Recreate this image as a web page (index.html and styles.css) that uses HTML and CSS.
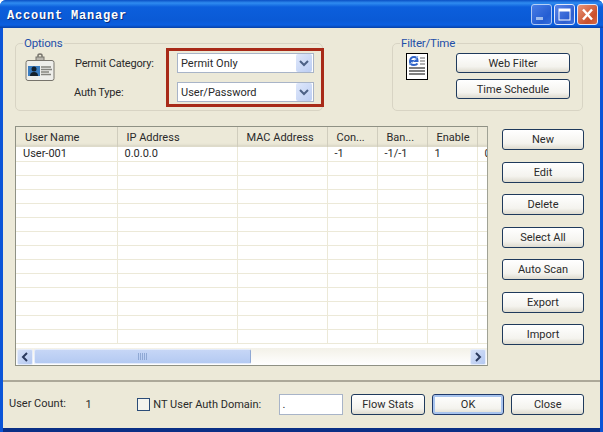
FILE: index.html
```html
<!DOCTYPE html>
<html lang="en">
<head>
<meta charset="utf-8">
<title>Account Manager</title>
<link rel="stylesheet" href="styles.css">
</head>
<body>
<div class="window">
  <header class="titlebar">
    <span class="title">Account Manager</span>
    <div class="caption-buttons">
      <span class="cap cap-min"><svg width="21" height="21" viewBox="0 0 21 21"><rect x="5" y="13" width="7" height="3" fill="#c8d6f4"/></svg></span>
      <span class="cap cap-max"><svg width="21" height="21" viewBox="0 0 21 21"><rect x="5" y="5" width="11" height="11" fill="none" stroke="#fff"/><rect x="5" y="5" width="11" height="2.5" fill="#fff"/></svg></span>
      <span class="cap cap-close"><svg width="21" height="21" viewBox="0 0 21 21"><path d="M6 5.500 15 15.500M15 5.500 6 15.500" stroke="#fff" stroke-width="2.400" fill="none"/></svg></span>
    </div>
  </header>
  <main class="client">
    <section class="top-row">
      <fieldset class="group group-options">
        <legend>Options</legend>
        <svg class="badge-icon" width="30" height="30" viewBox="0 0 30 30">
          <path d="M13 5V2.500Q13 1 15 1T17 2.500V5" fill="none" stroke="#77746c" stroke-width="1.500"/>
          <rect x="11" y="4" width="8" height="5" fill="#b9b6ad" stroke="#77746c"/>
          <rect x="1" y="7.500" width="28" height="20" rx="2" fill="#eeeeea" stroke="#77746c"/>
          <rect x="3" y="13" width="12" height="10" fill="#3a7cc0"/>
          <circle cx="9" cy="16" r="2.500" fill="#14202c"/>
          <path d="M5 23Q5 19 9 19T13 23Z" fill="#14202c"/>
          <path d="M16 14H26M16 16.500H27M16 19H24M16 21.500H26" stroke="#85857f" stroke-width="1.300"/>
        </svg>
        <div class="form-grid">
          <label class="field-label">Permit Category:</label>
          <div class="select"><span>Permit Only</span><span class="select-arrow"><svg width="16" height="18" viewBox="0 0 16 18"><path d="M4 7 8 11 12 7" fill="none" stroke="#4d6185" stroke-width="2"/></svg></span></div>
          <label class="field-label label-auth">Auth Type:</label>
          <div class="select"><span>User/Password</span><span class="select-arrow"><svg width="16" height="18" viewBox="0 0 16 18"><path d="M4 7 8 11 12 7" fill="none" stroke="#4d6185" stroke-width="2"/></svg></span></div>
        </div>
        <div class="highlight"></div>
      </fieldset>
      <fieldset class="group group-filter">
        <legend>Filter/Time</legend>
        <svg class="page-icon" width="22" height="27" viewBox="0 0 22 27">
          <rect x=".5" y=".5" width="21" height="26" fill="#fff" stroke="#000"/>
          <path d="M3 15H19M3 18H19M3 21H19" stroke="#555" stroke-width="1.600"/>
          <path d="M14 5H19M14 8H19M14 11H19" stroke="#999" stroke-width="1.400"/>
          <path d="M4 8H11.500Q11.500 4 8 4T4 8 8 12Q10.500 12 11.500 10.500" fill="none" stroke="#2f63c8" stroke-width="2"/>
          <path d="M3 12Q8 9 12 3" fill="none" stroke="#8ab0e8"/>
        </svg>
        <div class="filter-buttons">
          <button class="btn btn-filter">Web Filter</button>
          <button class="btn btn-filter">Time Schedule</button>
        </div>
      </fieldset>
    </section>
    <section class="mid-row">
      <div class="list">
        <div class="list-view">
          <table class="grid">
            <colgroup><col class="c1"><col class="c2"><col class="c3"><col class="c4"><col class="c5"><col class="c6"><col class="c7"></colgroup>
            <thead>
              <tr><th>User Name</th><th>IP Address</th><th>MAC Address</th><th>Con...</th><th>Ban...</th><th>Enable</th><th class="th-end"></th></tr>
            </thead>
            <tbody>
              <tr><td>User-001</td><td>0.0.0.0</td><td></td><td>-1</td><td>-1/-1</td><td>1</td><td class="td-clip">0</td></tr>
              <tr><td></td><td></td><td></td><td></td><td></td><td></td><td></td></tr>
              <tr><td></td><td></td><td></td><td></td><td></td><td></td><td></td></tr>
              <tr><td></td><td></td><td></td><td></td><td></td><td></td><td></td></tr>
              <tr><td></td><td></td><td></td><td></td><td></td><td></td><td></td></tr>
              <tr><td></td><td></td><td></td><td></td><td></td><td></td><td></td></tr>
              <tr><td></td><td></td><td></td><td></td><td></td><td></td><td></td></tr>
              <tr><td></td><td></td><td></td><td></td><td></td><td></td><td></td></tr>
              <tr><td></td><td></td><td></td><td></td><td></td><td></td><td></td></tr>
              <tr><td></td><td></td><td></td><td></td><td></td><td></td><td></td></tr>
              <tr><td></td><td></td><td></td><td></td><td></td><td></td><td></td></tr>
              <tr><td></td><td></td><td></td><td></td><td></td><td></td><td></td></tr>
              <tr><td></td><td></td><td></td><td></td><td></td><td></td><td></td></tr>
              <tr><td></td><td></td><td></td><td></td><td></td><td></td><td></td></tr>
            </tbody>
          </table>
        </div>
        <div class="scrollbar">
          <span class="sb-btn"><svg width="16" height="16" viewBox="0 0 16 16"><path d="M10 4 6 8 10 12" fill="none" stroke="#2b3a5e" stroke-width="2"/></svg></span>
          <div class="sb-track">
            <span class="sb-thumb"><svg width="9" height="7" viewBox="0 0 9 7"><path d="M.5 0V7M2.500 0V7M4.500 0V7M6.500 0V7M8.500 0V7" stroke="#8fa8d4"/></svg></span>
          </div>
          <span class="sb-btn"><svg width="16" height="16" viewBox="0 0 16 16"><path d="M6 4 10 8 6 12" fill="none" stroke="#2b3a5e" stroke-width="2"/></svg></span>
        </div>
      </div>
      <div class="side-buttons">
        <button class="btn btn-side">New</button>
        <button class="btn btn-side">Edit</button>
        <button class="btn btn-side">Delete</button>
        <button class="btn btn-side">Select All</button>
        <button class="btn btn-side">Auto Scan</button>
        <button class="btn btn-side">Export</button>
        <button class="btn btn-side">Import</button>
      </div>
    </section>
    <footer class="bottom-row">
      <span class="count-label">User Count:</span>
      <span class="count-value">1</span>
      <label class="check-wrap"><span class="checkbox"></span><span>NT User Auth Domain:</span></label>
      <div class="domain-input">.</div>
      <button class="btn btn-flow">Flow Stats</button>
      <button class="btn btn-ok">OK</button>
      <button class="btn btn-close">Close</button>
    </footer>
  </main>
</div>
</body>
</html>
```

FILE: styles.css
```css
* { box-sizing: border-box; }
html, body { margin: 0; padding: 0; }
body {
  width: 603px;
  height: 432px;
  overflow: hidden;
  font-family: Roboto, "Liberation Sans", sans-serif;
  font-size: 11px;
  color: #2a2a2a;
}
.window {
  width: 603px;
  height: 432px;
  display: flex;
  flex-direction: column;
  background: #0b55d8;
  border-radius: 6px 6px 0 0;
  overflow: hidden;
}
.titlebar {
  height: 28px;
  flex: none;
  display: flex;
  align-items: center;
  justify-content: space-between;
  padding: 0 5px 0 7px;
  background: linear-gradient(#0a4fc4 0, #2f8cf0 3px, #0c5fdc 7px, #0a5ad6 20px, #0b5fe0 25px, #0741a8 28px);
}
.title {
  margin-top: 3px;
  font-family: "Liberation Mono", monospace;
  font-weight: 700;
  font-size: 12px;
  letter-spacing: .8px;
  color: #fff;
  text-shadow: 1px 1px 0 #0a2d7a;
}
.caption-buttons { display: flex; gap: 2px; }
.cap {
  width: 21px;
  height: 21px;
  display: block;
  border: 1px solid #dfe8fb;
  border-radius: 3px;
}
.cap svg { display: block; margin: -1px; }
.cap-min, .cap-max { background: linear-gradient(135deg, #5a85e8, #2c5ed0 70%, #3f73e0); }
.cap-min { opacity: .78; }
.cap-close { background: linear-gradient(135deg, #e89478, #c9502c 70%, #d86c48); }
.client {
  flex: 1;
  margin: 0 3px 4px;
  background: #ece9d8;
  padding: 9px 0 0;
  display: flex;
  flex-direction: column;
  box-shadow: 0 4px 0 #0a2f86;
}
.top-row {
  display: flex;
  justify-content: space-between;
  padding: 0 17px 0 12px;
  height: 74px;
}
.group {
  position: relative;
  margin: 0;
  padding: 0;
  height: 74px;
  border: 1px solid #d8d4c4;
  border-radius: 5px;
  display: flex;
  align-items: flex-start;
}
.group legend {
  margin-left: 7px;
  padding: 0 2px 0 1px;
  line-height: 12px;
  color: #1f4fa8;
  font-size: 11.500px;
  letter-spacing: -.2px;
}
.group-options { width: 308px; }
.group-filter { width: 191px; }
.badge-icon { flex: none; margin: 4px 0 0 9px; }
.form-grid {
  display: grid;
  grid-template-columns: 102px 137px;
  grid-template-rows: 20px 20px;
  row-gap: 9px;
  margin: 4px 0 0 20px;
  align-items: center;
}
.field-label { white-space: nowrap; letter-spacing: -.2px; }
.label-auth { margin-left: -1px; }
.select {
  height: 20px;
  width: 137px;
  display: flex;
  align-items: center;
  justify-content: space-between;
  background: #fff;
  border: 1px solid #a8b4c8;
  padding: 0 1px 0 3px;
}
.select-arrow {
  width: 16px;
  height: 18px;
  background: linear-gradient(135deg, #dfe8fb, #bccdf2);
  border-radius: 2px;
}
.select-arrow svg { display: block; }
.highlight {
  position: absolute;
  left: 150px;
  top: -1px;
  width: 158px;
  height: 59px;
  border: 3px solid #a82a18;
}
.page-icon { flex: none; margin: 4px 0 0 13px; }
.filter-buttons {
  display: flex;
  flex-direction: column;
  gap: 6px;
  margin: 4px 0 0 28px;
}
.btn {
  font: inherit;
  color: #2a2a2a;
  padding: 0;
  border: 1px solid #1f3a5c;
  border-radius: 3px;
  background: linear-gradient(#fff, #f4f3ee 70%, #dedbcf);
  white-space: nowrap;
}
.btn-filter { width: 114px; height: 20px; }
.mid-row {
  display: flex;
  align-items: flex-start;
  padding: 15px 0 0 12px;
}
.list {
  width: 473px;
  height: 240px;
  border: 1px solid #8f9184;
  border-right-color: #a0a295;
  display: flex;
  flex-direction: column;
  background: #fff;
}
.list-view { height: 221px; overflow: hidden; }
.grid {
  width: 471px;
  table-layout: fixed;
  border-collapse: collapse;
}
.c1 { width: 101px; }
.c2 { width: 120px; }
.c3 { width: 90px; }
.c4 { width: 50px; }
.c5 { width: 50px; }
.c6 { width: 50px; }
.c7 { width: 10px; }
.grid th {
  height: 20px;
  padding: 0 0 0 9px;
  font-weight: 400;
  text-align: left;
  background: linear-gradient(#ece9d8 80%, #dcd9c8);
  border-right: 1px solid #d0cdbd;
  box-shadow: inset 0 -2px 0 #dedbca;
  overflow: hidden;
  white-space: nowrap;
}
.grid th.th-end { border-right: 0; }
.grid td {
  height: 14px;
  padding: 0 0 0 7px;
  line-height: 13px;
  border-right: 1px solid #ece9d8;
  border-bottom: 1px solid #ece9d8;
  overflow: hidden;
  white-space: nowrap;
}
.grid td.td-clip { padding-left: 7px; border-right: 0; }
.scrollbar {
  height: 17px;
  display: flex;
  align-items: center;
  padding: 0 1px;
  background: linear-gradient(#f3f1e8, #fff);
}
.sb-btn {
  width: 16px;
  height: 16px;
  flex: none;
  background: linear-gradient(135deg, #d6e1f8, #b4c8f0);
  border: 1px solid #e6edfb;
  border-radius: 2px;
}
.sb-btn svg { display: block; margin: -1px; }
.sb-track { flex: 1; height: 16px; padding-left: 1px; }
.sb-thumb {
  width: 217px;
  height: 15px;
  display: flex;
  align-items: center;
  justify-content: center;
  background: linear-gradient(#c6d6f6, #b4caf2);
  border: 1px solid #e3ebfb;
  border-right-color: #8fa8d4;
  border-radius: 2px;
}
.side-buttons {
  display: flex;
  flex-direction: column;
  gap: 11.500px;
  margin: 3px 0 0 14px;
}
.btn-side { width: 82px; height: 21px; }
.bottom-row {
  margin-top: 14px;
  flex: 1;
  border-top: 2px solid #aca899;
  display: flex;
  align-items: center;
  padding: 0 16px 2px 6px;
}
.count-label { width: 77px; margin-top: -2px; white-space: nowrap; }
.count-value { width: 52px; margin-top: 1px; }
.check-wrap { display: flex; align-items: center; gap: 3px; width: 142px; white-space: nowrap; }
.checkbox { width: 13px; height: 13px; flex: none; background: #f4f4ee; border: 1px solid #2b4c78; }
.domain-input {
  width: 65px;
  height: 21px;
  background: #fff;
  border: 1px solid #a8b4c8;
  padding: 3px 0 0 3px;
}
.btn-flow { width: 74px; height: 21px; margin-left: 8px; }
.btn-ok { width: 73px; height: 21px; margin-left: 7px; border-color: #1f3a6c; box-shadow: inset 0 0 0 2px #a8c4ee; }
.btn-close { width: 73px; height: 21px; margin-left: 7px; }
```
